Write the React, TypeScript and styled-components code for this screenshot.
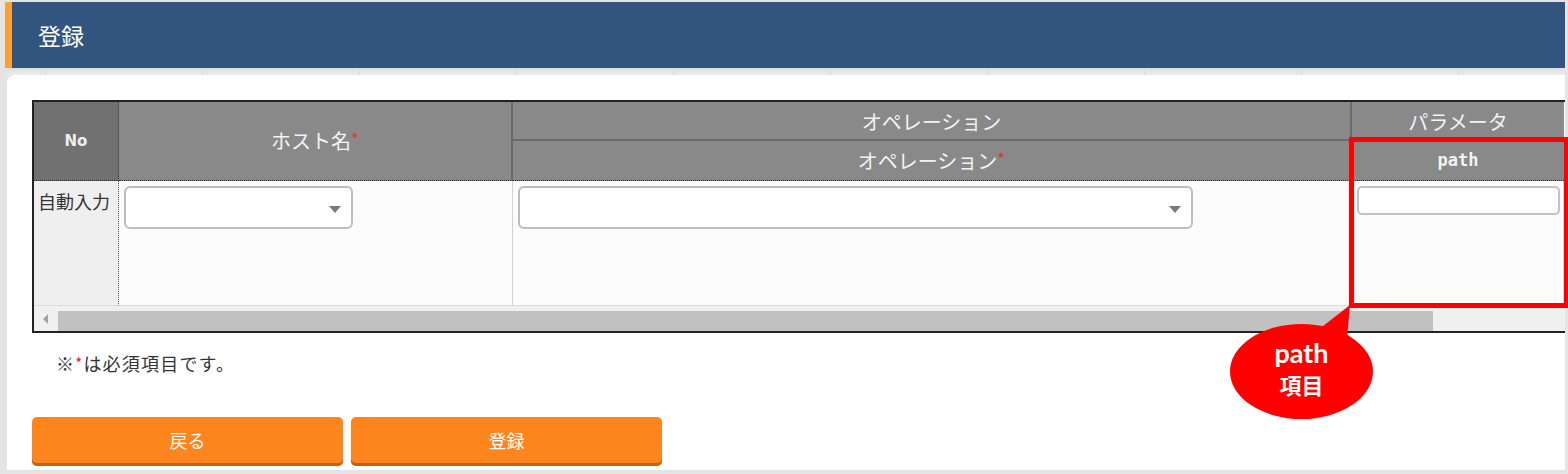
import React from 'react';
import styled, { createGlobalStyle } from 'styled-components';

const GlobalStyle = createGlobalStyle`
  html, body {
    margin: 0;
    padding: 0;
    background: #e4e4e4;
  }
  body {
    font-family: "Noto Sans CJK JP", "Noto Sans", sans-serif;
  }
  * { box-sizing: border-box; }
`;

const Page = styled.div`
  position: relative;
  width: 1568px;
  height: 474px;
  padding-top: 2px;
  overflow: hidden;
  background: #e4e4e4;
`;

const TitleBar = styled.div`
  margin-left: 5px;
  width: 1560px;
  height: 66px;
  display: flex;
  align-items: center;
  padding-left: 26px;
  background: #32557f;
  border-left: 7px solid #f9a23a;
  color: #fff;
  font-size: 23px;
  line-height: 1;
`;

const Band = styled.div`
  margin-left: 5px;
  width: 1560px;
  height: 7px;
  background:
    linear-gradient(90deg, transparent 0, transparent 156px, #dadada 156px, #dadada 157px),
    linear-gradient(#dedede, #ececec);
  background-size: 157px 100%, 100% 100%;
  background-position: 41px 0, 0 0;
`;

const Panel = styled.div`
  margin-left: 7px;
  width: 1558px;
  height: 395px;
  padding: 25px 0 0 25px;
  background: #fff;
  border-radius: 8px 0 0 0;
  overflow: hidden;
`;

const Frame = styled.div`
  width: 1540px;
  border: 2px solid #222;
  border-right: none;
`;

const Grid = styled.div`
  display: grid;
  grid-template-columns: 85px 394px 839px 212px;
  grid-template-rows: 39px 40px 125px;
`;

const HeadCell = styled.div<{ $row: string; $col: string; $dark?: boolean; $dotted?: boolean; $right?: boolean; $bottom?: boolean; $base?: boolean }>`
  grid-row: ${(p) => p.$row};
  grid-column: ${(p) => p.$col};
  display: flex;
  align-items: center;
  justify-content: center;
  background: ${(p) => (p.$dark ? '#717171' : '#898989')};
  color: #f3f3f3;
  font-size: 20px;
  line-height: 1;
  border-right: ${(p) => (p.$dotted ? '1px dotted #3c3c3c' : p.$right ? '2px solid #6a6a6a' : 'none')};
  border-bottom: ${(p) => (p.$base ? '1px dotted #2a2a2a' : p.$bottom ? '2px solid #6a6a6a' : 'none')};
  padding-top: ${(p) => (p.$bottom ? '2px' : '0')};
`;

const Req = styled.span`
  position: relative;
  top: -3px;
  color: #d93a3a;
  font-size: 17px;
`;

const NoLabel = styled.span`
  font-family: "DejaVu Sans", sans-serif;
  font-weight: bold;
  font-size: 15px;
  color: #eee;
`;

const MonoLabel = styled.span`
  font-family: "DejaVu Sans Mono", monospace;
  font-weight: bold;
  font-size: 17px;
  color: #f3f3f3;
`;

const BodyCell = styled.div<{ $side?: boolean; $dotted?: boolean }>`
  grid-row: 3;
  background: ${(p) => (p.$side ? '#efefef' : '#fbfbfb')};
  border-right: ${(p) => (p.$dotted ? '1px dotted #555' : '1px solid #d2d2d2')};
  border-bottom: 1px solid #dcdcdc;
  padding: 5px 0 0 5px;
  color: #333;
  font-size: 18px;
  line-height: 24px;
`;

const AutoText = styled.div`
  padding: 3px 0 0 0;
  margin-left: -1px;
`;

const Select = styled.div<{ $w: number }>`
  position: relative;
  width: ${(p) => p.$w}px;
  height: 43px;
  background: #fff;
  border: 2px solid #bdbdbd;
  border-radius: 6px;
  &::after {
    content: '';
    position: absolute;
    right: 10px;
    top: 18px;
    border-left: 6px solid transparent;
    border-right: 6px solid transparent;
    border-top: 7px solid #7a7a7a;
  }
`;

const TextInput = styled.div`
  width: 203px;
  height: 29px;
  background: #fff;
  border: 2px solid #c3c3c3;
  border-radius: 5px;
`;

const ScrollBar = styled.div`
  height: 25px;
  display: flex;
  align-items: center;
  background: #f0f0f0;
`;

const ArrowLeft = styled.div`
  width: 24px;
  display: flex;
  justify-content: center;
  &::before {
    content: '';
    border-top: 5px solid transparent;
    border-bottom: 5px solid transparent;
    border-right: 5px solid #a3a3a3;
    margin-left: -2px;
  }
`;

const Thumb = styled.div`
  width: 1375px;
  height: 20px;
  margin-top: 4px;
  background: #c1c1c1;
`;

const Note = styled.p`
  margin: 18px 0 0 24px;
  font-size: 18px;
  line-height: 24px;
  letter-spacing: 1.2px;
  color: #333;
`;

const Star = styled.span`
  position: relative;
  top: -2px;
  color: #e02020;
  font-size: 15px;
`;

const Buttons = styled.div`
  display: flex;
  gap: 8px;
  margin-top: 40px;
`;

const Button = styled.button`
  width: 311px;
  height: 49px;
  border: none;
  border-radius: 5px;
  background: #ff851f;
  box-shadow: inset 0 -3px 0 #c7600f;
  color: #fff;
  font-family: "Noto Sans CJK JP", sans-serif;
  font-size: 18px;
  padding: 0 0 3px;
`;

const Highlight = styled.div`
  position: absolute;
  left: 1349px;
  top: 137px;
  width: 220px;
  height: 171px;
  border: 5px solid #ff0000;
`;

const Bubble = styled.div`
  position: absolute;
  left: 1230px;
  top: 324px;
  width: 143px;
  height: 95px;
  border-radius: 50%;
  background: #ff0000;
  color: #fff;
  font-weight: bold;
  display: flex;
  flex-direction: column;
  align-items: center;
  justify-content: center;
  gap: 2px;
  padding-bottom: 6px;
`;

const BubbleLine = styled.span<{ $latin?: boolean }>`
  display: block;
  font-family: ${(p) => (p.$latin ? 'Lato, "Noto Sans", sans-serif' : '"Noto Sans CJK JP", sans-serif')};
  font-size: ${(p) => (p.$latin ? '27px' : '22px')};
  line-height: ${(p) => (p.$latin ? '28px' : '30px')};
`;

const Tail = styled.svg`
  position: absolute;
  left: 1310px;
  top: 300px;
`;

export default function App() {
  return (
    <Page>
      <GlobalStyle />
      <TitleBar>登録</TitleBar>
      <Band />
      <Panel>
        <Frame>
          <Grid>
            <HeadCell $row="1 / 3" $col="1" $dark $dotted $base>
              <NoLabel>No</NoLabel>
            </HeadCell>
            <HeadCell $row="1 / 3" $col="2" $right $base>
              <span>
                ホスト名<Req>*</Req>
              </span>
            </HeadCell>
            <HeadCell $row="1" $col="3" $right $bottom>
              オペレーション
            </HeadCell>
            <HeadCell $row="1" $col="4" $bottom>
              パラメータ
            </HeadCell>
            <HeadCell $row="2" $col="3" $right $base>
              <span>
                オペレーション<Req>*</Req>
              </span>
            </HeadCell>
            <HeadCell $row="2" $col="4" $base>
              <MonoLabel>path</MonoLabel>
            </HeadCell>
            <BodyCell $side $dotted>
              <AutoText>自動入力</AutoText>
            </BodyCell>
            <BodyCell>
              <Select $w={229} />
            </BodyCell>
            <BodyCell>
              <Select $w={675} />
            </BodyCell>
            <BodyCell>
              <TextInput />
            </BodyCell>
          </Grid>
          <ScrollBar>
            <ArrowLeft />
            <Thumb />
          </ScrollBar>
        </Frame>
        <Note>
          ※<Star>*</Star>は必須項目です。
        </Note>
        <Buttons>
          <Button>戻る</Button>
          <Button>登録</Button>
        </Buttons>
      </Panel>
      <Highlight />
      <Tail width="50" height="40" viewBox="0 0 50 40">
        <polygon points="8,30 40,5 37,38" fill="#ff0000" />
      </Tail>
      <Bubble>
        <BubbleLine $latin>path</BubbleLine>
        <BubbleLine>項目</BubbleLine>
      </Bubble>
    </Page>
  );
}
